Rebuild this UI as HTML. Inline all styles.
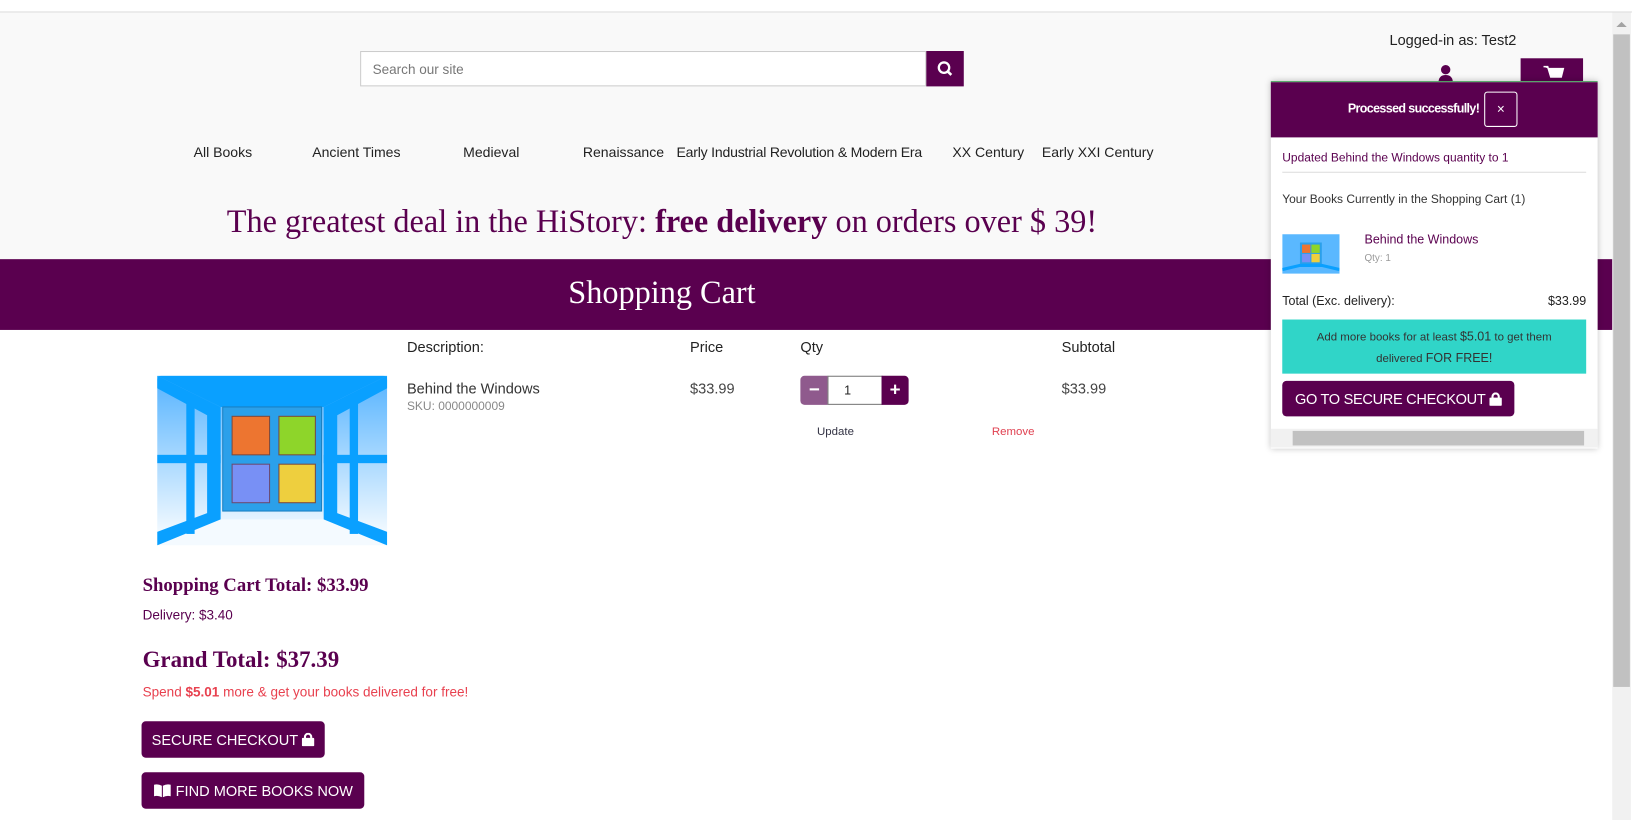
<!DOCTYPE html>
<html><head><style>
*{box-sizing:border-box;margin:0;padding:0}
body{width:1632px;height:820px;background:#fff;font-family:"Liberation Sans",sans-serif;overflow:hidden;color:#222}
#w{position:absolute;left:0;top:0;width:1568px;height:788px;transform:scale(1.0408);transform-origin:0 0}
.a{position:absolute}
.p{background:#5a004f}
.serif{font-family:"Liberation Serif",serif}
.btn{position:absolute;background:#5a004f;color:#fff;border-radius:4px;font-size:14px;display:flex;align-items:center;justify-content:center}
</style></head><body><div id="w">
<div class="a" style="left:0;top:0;width:1568px;height:12px;background:#fff;border-bottom:1px solid #ddd"></div>
<div class="a" style="left:0;top:12px;width:1549px;height:237px;background:#f9f9f9"></div>
<div class="a" style="left:1549px;top:12px;width:18px;height:776px;background:#f1f1f1"></div>
<div class="a" style="left:1550px;top:33px;width:16px;height:627px;background:#c1c1c1"></div>
<div class="a" style="left:1553px;top:21px;width:0;height:0;border-left:5px solid transparent;border-right:5px solid transparent;border-bottom:5px solid #a3a3a3"></div>

<div class="a" style="left:346px;top:49px;width:544px;height:34px;background:#fff;border:1px solid #ccc;font-size:13px;color:#777;padding:9px 11px">Search our site</div>
<div class="a p" style="left:890px;top:49px;width:36px;height:34px"><svg width="36" height="34"><circle cx="17" cy="16" r="5" fill="none" stroke="#fff" stroke-width="2.2"/><line x1="20.5" y1="19.5" x2="24" y2="23" stroke="#fff" stroke-width="2.5"/></svg></div>
<div class="a" style="left:1335px;top:30px;font-size:14px;color:#222">Logged-in as: Test2</div>
<svg class="a" style="left:1380px;top:62px" width="18" height="18"><circle cx="9" cy="5" r="4.5" fill="#5a004f"/><path d="M2 18 Q2 10 9 10 Q16 10 16 18Z" fill="#5a004f"/></svg>
<div class="a p" style="left:1461px;top:56px;width:60px;height:22px"><svg width="60" height="22"><path d="M22 8 L26 8 L29 18 L39 18 L41 10 L27 10" fill="#fff" stroke="#fff" stroke-width="1.5"/></svg></div>

<div class="a" style="top:139px;left:0;font-size:13.5px;color:#222;white-space:nowrap">
<span class="a" style="left:186px">All Books</span><span class="a" style="left:300px">Ancient Times</span><span class="a" style="left:445px">Medieval</span><span class="a" style="left:560px">Renaissance</span><span class="a" style="left:650px;letter-spacing:-.2px">Early Industrial Revolution &amp; Modern Era</span><span class="a" style="left:915px">XX Century</span><span class="a" style="left:1001px">Early XXI Century</span></div>
<div class="a serif" style="left:0;width:1272px;top:195px;text-align:center;font-size:31px;color:#5a004f">The greatest deal in the HiStory: <b>free delivery</b> on orders over $ 39!</div>
<div class="a p" style="left:0;top:249px;width:1549px;height:68px"></div>
<div class="a serif" style="left:0;width:1272px;top:263px;text-align:center;font-size:31px;color:#fff">Shopping Cart</div>

<div class="a" style="left:391px;top:325px;font-size:14px">Description:</div>
<div class="a" style="left:663px;top:325px;font-size:14px">Price</div>
<div class="a" style="left:769px;top:325px;font-size:14px">Qty</div>
<div class="a" style="left:1020px;top:325px;font-size:14px">Subtotal</div>

<svg class="a" style="left:151px;top:361px" width="221" height="163">
<defs><linearGradient id="g" x1="0" y1="0" x2="0" y2="1"><stop offset="0" stop-color="#55b3ff"/><stop offset="1" stop-color="#fff"/></linearGradient></defs>
<rect width="221" height="163" rx="4" fill="url(#g)"/>
<path d="M0 0 H221 L160 30 H61 Z" fill="#0aa0ff"/>
<path d="M0 163 L61 138 H160 L221 163 Z" fill="#f4faff"/>
<path d="M0 0 L61 30 V138 L0 163 V150 L48 132 V38 L0 12Z" fill="#0aa0ff"/>
<path d="M221 0 L160 30 V138 L221 163 V150 L173 132 V38 L221 12Z" fill="#0aa0ff"/>
<rect x="28" y="18" width="8" height="134" fill="#0aa0ff"/><rect x="185" y="18" width="8" height="134" fill="#0aa0ff"/>
<rect x="0" y="76" width="61" height="8" fill="#0aa0ff"/><rect x="160" y="76" width="61" height="8" fill="#0aa0ff"/>
<rect x="63" y="30" width="95" height="100" fill="#2ba0ea" stroke="#1a7fc0"/>
<rect x="72" y="39" width="36" height="37" fill="#ed7530" stroke="#7a4a40"/><rect x="117" y="39" width="35" height="37" fill="#8ed52a" stroke="#7a4a40"/>
<rect x="72" y="85" width="36" height="37" fill="#7890f5" stroke="#6a4a70"/><rect x="117" y="85" width="35" height="37" fill="#eecf3e" stroke="#7a4a40"/>
</svg>

<div class="a" style="left:391px;top:365px;font-size:14px;color:#333">Behind the Windows</div>
<div class="a" style="left:391px;top:385px;font-size:11.5px;color:#888">SKU: 0000000009</div>
<div class="a" style="left:663px;top:365px;font-size:14px;color:#444">$33.99</div>
<div class="a" style="left:1020px;top:365px;font-size:14px;color:#444">$33.99</div>
<div class="a" style="left:769px;top:361px;width:27px;height:28px;background:#8f5a8d;border-radius:4px 0 0 4px;color:#fff;text-align:center;font-size:18px;line-height:26px;font-weight:bold">−</div>
<div class="a" style="left:795px;top:361px;width:53px;height:28px;border:1px solid #777;background:#fff;font-size:12px;line-height:26px;padding-left:15px">1</div>
<div class="a p" style="left:847px;top:361px;width:26px;height:28px;border-radius:0 4px 4px 0;color:#fff;text-align:center;font-size:18px;line-height:26px;font-weight:bold">+</div>
<div class="a" style="left:785px;top:409px;font-size:11px;color:#334">Update</div>
<div class="a" style="left:953px;top:409px;font-size:11px;color:#e04050">Remove</div>

<div class="a serif" style="left:137px;top:552px;font-size:18px;font-weight:bold;color:#5a004f">Shopping Cart Total: $33.99</div>
<div class="a" style="left:137px;top:583px;font-size:13px;color:#5a004f">Delivery: $3.40</div>
<div class="a serif" style="left:137px;top:621px;font-size:22px;font-weight:bold;color:#5a004f">Grand Total: $37.39</div>
<div class="a" style="left:137px;top:657px;font-size:13px;color:#e8414f">Spend <b>$5.01</b> more &amp; get your books delivered for free!</div>
<div class="btn" style="left:136px;top:693px;width:176px;height:35px">SECURE CHECKOUT&nbsp;<svg width="12" height="13"><rect x="0" y="5" width="12" height="8" rx="1" fill="#fff"/><path d="M3 6 V4 a3 3 0 0 1 6 0 V6" fill="none" stroke="#fff" stroke-width="2"/></svg></div>
<div class="btn" style="left:136px;top:742px;width:214px;height:35px"><svg width="18" height="13"><path d="M1 1 Q5 0 8.5 2 V13 Q5 11 1 12Z M17 1 Q13 0 9.5 2 V13 Q13 11 17 12Z" fill="#fff"/></svg>&nbsp;FIND MORE BOOKS NOW</div>

<div class="a" style="left:1221px;top:78px;width:314px;height:353px;background:#fff;box-shadow:0 0 6px rgba(0,0,0,.25);border-top:1px solid #3a9a50">
 <div class="p" style="height:53px;position:relative"><div class="a" style="left:74px;top:18px;color:#fff;font-size:12px;font-weight:bold;letter-spacing:-.6px">Processed successfully!</div>
 <div class="a" style="left:205px;top:9px;width:32px;height:34px;border:1px solid #fff;border-radius:3px;color:#fff;font-size:13px;text-align:center;line-height:32px">×</div></div>
 <div class="a" style="left:11px;top:67px;font-size:11.5px;color:#5a004f">Updated Behind the Windows quantity to 1</div>
 <div class="a" style="left:11px;top:86px;width:292px;height:1px;background:#ddd"></div>
 <div class="a" style="left:11px;top:107px;font-size:11.5px;color:#333">Your Books Currently in the Shopping Cart (1)</div>
 <svg class="a" style="left:11px;top:146px" width="55" height="38"><rect width="55" height="38" fill="#5ab8ff"/><rect x="17" y="8" width="21" height="22" fill="#2ba0ea"/><rect x="19" y="10" width="8" height="8" fill="#ed7530"/><rect x="28" y="10" width="8" height="8" fill="#8ed52a"/><rect x="19" y="19" width="8" height="8" fill="#7890f5"/><rect x="28" y="19" width="8" height="8" fill="#eecf3e"/><path d="M0 34 L17 30 H38 L55 34" stroke="#0aa0ff" stroke-width="3" fill="none"/></svg>
 <div class="a" style="left:90px;top:144px;font-size:12px;color:#5a004f">Behind the Windows</div>
 <div class="a" style="left:90px;top:164px;font-size:9.5px;color:#999">Qty: 1</div>
 <div class="a" style="left:11px;top:203px;font-size:12px;color:#222">Total (Exc. delivery):</div>
 <div class="a" style="right:11px;top:203px;font-size:12px;color:#222">$33.99</div>
 <div class="a" style="left:11px;top:228px;width:292px;height:52px;background:#30d5c8;text-align:center;font-size:11px;line-height:20px;padding-top:6px;color:#333">Add more books for at least <span style="font-size:12px">$5.01</span> to get them<br>delivered <span style="font-size:12px">FOR FREE!</span></div>
 <div class="btn" style="left:11px;top:287px;width:223px;height:34px;font-size:14px;letter-spacing:-.3px">GO TO SECURE CHECKOUT&nbsp;<svg width="12" height="13"><rect x="0" y="5" width="12" height="8" rx="1" fill="#fff"/><path d="M3 6 V4 a3 3 0 0 1 6 0 V6" fill="none" stroke="#fff" stroke-width="2"/></svg></div>
 <div class="a" style="left:0;top:333px;width:314px;height:18px;background:#f1f1f1"></div>
 <div class="a" style="left:21px;top:335px;width:280px;height:14px;background:#c1c1c1"></div>
</div>
</div></body></html>
